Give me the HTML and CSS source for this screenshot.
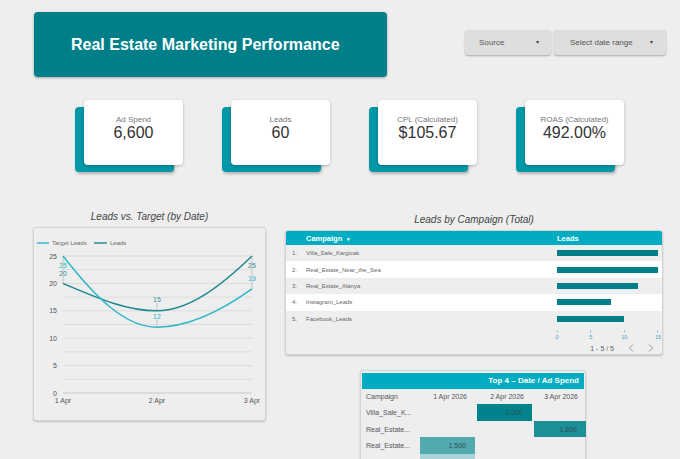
FILE: index.html
```html
<!DOCTYPE html>
<html lang="en">
<head>
  <meta charset="UTF-8">
  <meta name="viewport" content="width=device-width, initial-scale=1.0">
  <title>Real Estate Marketing Performance</title>
  <link rel="stylesheet" href="styles.css">
</head>
<body>

<header class="top">
  <div class="title-box">
    <h1>Real Estate Marketing Performance</h1>
  </div>
  <div class="filters">
    <div class="filter filter-source">Source <span class="caret">&#9662;</span></div>
    <div class="filter filter-date">Select date range <span class="caret">&#9662;</span></div>
  </div>
</header>

<section class="scorecards">
  <div class="scorecard">
    <div class="sc-label">Ad Spend</div>
    <div class="sc-value">6,600</div>
  </div>
  <div class="scorecard">
    <div class="sc-label">Leads</div>
    <div class="sc-value">60</div>
  </div>
  <div class="scorecard">
    <div class="sc-label">CPL (Calculated)</div>
    <div class="sc-value">$105.67</div>
  </div>
  <div class="scorecard">
    <div class="sc-label">ROAS (Calculated)</div>
    <div class="sc-value">492.00%</div>
  </div>
</section>

<section class="charts">
  <div class="line-panel">
    <h2 class="chart-title">Leads vs. Target (by Date)</h2>
    <div class="chart-box">
      <svg class="line-chart" width="231" height="192" viewBox="0 0 231 192">
        <!-- legend -->
        <line x1="3" y1="15" x2="15" y2="15" class="s-target"/>
        <text x="18" y="17" class="legend">Target Leads</text>
        <line x1="60" y1="15" x2="73" y2="15" class="s-leads"/>
        <text x="76" y="17" class="legend">Leads</text>

        <!-- grid -->
        <g class="grid">
          <line x1="29" y1="28" x2="218" y2="28"/>
          <line x1="29" y1="41.7" x2="218" y2="41.7"/>
          <line x1="29" y1="55.4" x2="218" y2="55.4"/>
          <line x1="29" y1="69.1" x2="218" y2="69.1"/>
          <line x1="29" y1="82.8" x2="218" y2="82.8"/>
          <line x1="29" y1="96.5" x2="218" y2="96.5"/>
          <line x1="29" y1="110.2" x2="218" y2="110.2"/>
          <line x1="29" y1="123.9" x2="218" y2="123.9"/>
          <line x1="29" y1="137.6" x2="218" y2="137.6"/>
          <line x1="29" y1="151.3" x2="218" y2="151.3"/>
          <line x1="29" y1="165" x2="218" y2="165" class="base"/>
        </g>

        <g class="y-labels">
          <text x="23" y="30.5">25</text>
          <text x="23" y="57.9">20</text>
          <text x="23" y="85.3">15</text>
          <text x="23" y="112.7">10</text>
          <text x="23" y="140.1">5</text>
          <text x="23" y="167.5">0</text>
        </g>
        <g class="x-labels">
          <text x="29" y="175">1 Apr</text>
          <text x="123" y="175">2 Apr</text>
          <text x="218" y="175">3 Apr</text>
        </g>

        <!-- label ticks -->
        <g class="ticks">
          <line x1="29" y1="28" x2="29" y2="55.4"/>
          <line x1="123" y1="75" x2="123" y2="82"/>
          <line x1="123" y1="92" x2="123" y2="98"/>
          <line x1="218" y1="28" x2="218" y2="60.9"/>
        </g>

        <path class="s-leads" d="M29,55.4 C61,69 91,82.8 123,82.8 C155,82.8 187,58 218,28"/>
        <path class="s-target" d="M29,28 C61,69 91,99.2 123,99.2 C155,99.2 187,83 218,60.9"/>

        <g class="data-labels">
          <text x="29" y="39.5" class="l-target">25</text>
          <text x="29" y="47.5" class="l-leads">20</text>
          <text x="123" y="74" class="l-leads">15</text>
          <text x="123" y="91" class="l-target">12</text>
          <text x="218" y="39.5" class="l-leads">25</text>
          <text x="218" y="52.5" class="l-target">19</text>
        </g>
      </svg>
    </div>
  </div>

  <div class="right-col">
    <div class="bar-panel">
      <h2 class="chart-title">Leads by Campaign (Total)</h2>
      <div class="table-box">
        <div class="table-head">
          <span></span>
          <span class="th-campaign">Campaign <span class="sort">&#9662;</span></span>
          <span class="th-leads">Leads</span>
        </div>
        <div class="table-row">
          <span class="idx">1.</span>
          <span class="name">Villa_Sale_Kargicak</span>
          <span class="bar-cell"><span class="bar" style="width: 101px"></span></span>
        </div>
        <div class="table-row">
          <span class="idx">2.</span>
          <span class="name">Real_Estate_Near_the_Sea</span>
          <span class="bar-cell"><span class="bar" style="width: 101px"></span></span>
        </div>
        <div class="table-row">
          <span class="idx">3.</span>
          <span class="name">Real_Estate_Alanya</span>
          <span class="bar-cell"><span class="bar" style="width: 80.8px"></span></span>
        </div>
        <div class="table-row">
          <span class="idx">4.</span>
          <span class="name">Instagram_Leads</span>
          <span class="bar-cell"><span class="bar" style="width: 53.9px"></span></span>
        </div>
        <div class="table-row">
          <span class="idx">5.</span>
          <span class="name">Facebook_Leads</span>
          <span class="bar-cell"><span class="bar" style="width: 67.3px"></span></span>
        </div>
        <div class="axis">
          <div class="tick"><i></i>0</div>
          <div class="tick"><i></i>5</div>
          <div class="tick"><i></i>10</div>
          <div class="tick"><i></i>15</div>
        </div>
        <div class="pager">
          <span>1 - 5 / 5</span>
          <svg width="6" height="8" viewBox="0 0 6 8"><path d="M5,0.5 L1.5,4 L5,7.5" /></svg>
          <svg width="6" height="8" viewBox="0 0 6 8"><path d="M1,0.5 L4.5,4 L1,7.5" /></svg>
        </div>
      </div>
    </div>

    <div class="pivot">
      <div class="pivot-head">Top 4 &ndash; Date / Ad Spend</div>
      <div class="pivot-grid">
        <div class="ph ph-left">Campaign</div>
        <div class="ph">1 Apr 2026</div>
        <div class="ph">2 Apr 2026</div>
        <div class="ph">3 Apr 2026</div>

        <div class="pc-name">Villa_Sale_K...</div>
        <div class="pc"></div>
        <div class="pc heat-1">2,000</div>
        <div class="pc"></div>

        <div class="pc-name">Real_Estate...</div>
        <div class="pc"></div>
        <div class="pc"></div>
        <div class="pc heat-2">1,800</div>

        <div class="pc-name">Real_Estate...</div>
        <div class="pc heat-3">1,500</div>
        <div class="pc"></div>
        <div class="pc"></div>

        <div class="pc-name">Instagram_L...</div>
        <div class="pc heat-4">1,300</div>
        <div class="pc"></div>
        <div class="pc"></div>
      </div>
    </div>
  </div>
</section>

</body>
</html>
```

FILE: styles.css
```css
html, body {
  height: 459px;
  overflow: hidden;
}
body {
  font-family: "Liberation Sans", Arial, sans-serif;
  margin: 0;
  padding: 0;
  background-color: #eeeeee;
  color: #333;
}
.top {
  display: flex;
  align-items: flex-start;
  padding: 12px 0 0 34px;
}
.title-box {
  width: 353px;
  height: 65px;
  background-color: #007f89;
  border-radius: 4px;
  box-shadow: 0 1px 3px rgba(0, 0, 0, 0.3);
}
h1 {
  margin: 0;
  padding-left: 37px;
  font-size: 16px;
  line-height: 65px;
  color: #fff;
}
.filters {
  display: flex;
  gap: 3px;
  margin: 18px 0 0 78px;
}
.filter {
  height: 25px;
  line-height: 25px;
  background-color: #dedede;
  border-radius: 3px;
  box-shadow: 0 1px 2px rgba(0, 0, 0, 0.3);
  font-size: 8px;
  color: #555;
  box-sizing: border-box;
  display: flex;
  justify-content: space-between;
}
.filter-source {
  width: 86px;
  padding: 0 12px 0 14px;
}
.filter-date {
  width: 112px;
  padding: 0 13px 0 16px;
}
.caret {
  font-size: 6px;
  color: #444;
}
.scorecards {
  display: flex;
  gap: 48px;
  margin-top: 23px;
  padding-left: 84px;
}
.scorecard {
  width: 99px;
  height: 65px;
  box-sizing: border-box;
  padding-top: 15px;
  background-color: #fff;
  border-radius: 4px;
  text-align: center;
  box-shadow: 0 1px 3px rgba(0, 0, 0, 0.25), -9px 7px 0 #0097a7, -8px 9px 3px rgba(0, 0, 0, 0.25);
}
.sc-label {
  font-size: 8px;
  line-height: 10px;
  color: #777;
}
.sc-value {
  font-size: 16px;
  line-height: 16px;
  color: #333;
}
.charts {
  display: flex;
  align-items: flex-start;
  margin-top: 46px;
  padding-left: 33px;
}
.chart-title {
  margin: 0 0 4px 0;
  font-size: 10px;
  line-height: 12px;
  font-weight: normal;
  font-style: italic;
  text-align: center;
  color: #444;
}
.line-panel {
  width: 233px;
}
.chart-box {
  height: 194px;
  box-sizing: border-box;
  border: 1px solid #d4d4d4;
  border-radius: 3px;
  background-color: #eeeeee;
  box-shadow: 0 1px 2px rgba(0, 0, 0, 0.2);
}
.line-chart {
  display: block;
  font-family: "Liberation Sans", Arial, sans-serif;
}
.line-chart .grid line {
  stroke: #dcdcdc;
  stroke-width: 1;
}
.line-chart .grid line.base {
  stroke: #c8c8c8;
}
.line-chart .ticks line {
  stroke: #c4c4c4;
  stroke-width: 1;
}
.s-target, .s-leads {
  fill: none;
  stroke-width: 1.4;
}
.s-target {
  stroke: #29b6c8;
}
.s-leads {
  stroke: #1a8690;
}
.legend {
  font-size: 6px;
  fill: #666;
}
.y-labels text {
  font-size: 7px;
  fill: #555;
  text-anchor: end;
}
.x-labels text {
  font-size: 7px;
  fill: #555;
  text-anchor: middle;
}
.data-labels text {
  font-size: 7px;
  text-anchor: middle;
}
.l-target {
  fill: #2bb3c4;
}
.l-leads {
  fill: #3a8f98;
}
.right-col {
  width: 378px;
  margin-left: 19px;
  padding-top: 3px;
}
.table-box {
  height: 125px;
  box-sizing: border-box;
  border: 1px solid #d4d4d4;
  border-radius: 3px;
  background-color: #eeeeee;
  box-shadow: 0 1px 2px rgba(0, 0, 0, 0.2);
}
.table-head, .table-row {
  display: grid;
  grid-template-columns: 20px 251px 1fr;
  align-items: center;
}
.table-head {
  height: 14px;
  background-color: #00acc1;
  border-radius: 2px 2px 0 0;
  color: #fff;
  font-size: 7.5px;
  font-weight: bold;
}
.sort {
  font-size: 5px;
  margin-left: 3px;
}
.table-row {
  height: 16.4px;
  font-size: 6px;
  color: #666;
}
.table-row:nth-child(odd) {
  background-color: #fff;
}
.idx {
  padding-left: 6px;
}
.bar {
  display: block;
  height: 6px;
  background-color: #007f89;
}
.axis {
  display: flex;
  justify-content: space-between;
  width: 101px;
  height: 14px;
  margin-left: 271px;
  padding-top: 3px;
  box-sizing: border-box;
}
.tick {
  width: 0;
  display: flex;
  flex-direction: column;
  align-items: center;
  font-size: 5.5px;
  line-height: 6px;
  color: #3aa7b5;
  white-space: nowrap;
}
.tick i {
  display: block;
  width: 1px;
  height: 3px;
  background-color: #9ccfd6;
  margin-bottom: 1px;
}
.pager {
  display: flex;
  justify-content: flex-end;
  align-items: center;
  gap: 14px;
  height: 15px;
  padding-right: 8px;
  font-size: 7px;
  color: #666;
}
.pager svg path {
  fill: none;
  stroke: #999;
  stroke-width: 1;
}
.pivot {
  width: 226px;
  margin: 15px 0 0 75px;
  box-sizing: border-box;
  padding: 2px 1px 0 1px;
  border: 1px solid #d4d4d4;
  border-radius: 3px;
  background-color: #eeeeee;
  box-shadow: 0 1px 2px rgba(0, 0, 0, 0.2);
}
.pivot-head {
  height: 16px;
  line-height: 16px;
  padding-right: 5px;
  background-color: #00acc1;
  color: #fff;
  font-size: 8px;
  font-weight: bold;
  text-align: right;
}
.pivot-grid {
  display: grid;
  grid-template-columns: 56px 55px 55px 52px;
  grid-template-rows: 15px 17px 16px 17px 17px;
  column-gap: 2px;
  font-size: 7px;
  color: #555;
}
.ph {
  line-height: 15px;
  text-align: right;
  padding-right: 8px;
}
.ph-left {
  text-align: left;
  padding-left: 4px;
  padding-right: 0;
}
.pc-name {
  padding-left: 4px;
  display: flex;
  align-items: center;
  white-space: nowrap;
}
.pc {
  display: flex;
  align-items: center;
  justify-content: flex-end;
  padding-right: 9px;
  color: #2f4f52;
}
.heat-1 {
  background-color: #00838d;
}
.heat-2 {
  background-color: #1b9099;
}
.heat-3 {
  background-color: #52a9b0;
}
.heat-4 {
  background-color: #a9d4d8;
}
```
